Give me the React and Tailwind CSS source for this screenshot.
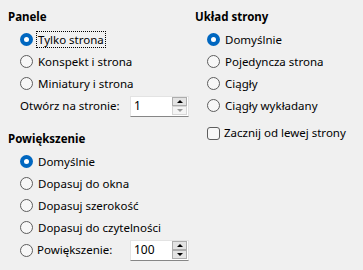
import React from "react";

function Radio({ checked }) {
  return checked ? (
    <span className="w-[13px] h-[13px] rounded-full bg-[#0067c0] flex items-center justify-center shrink-0">
      <span className="w-[5px] h-[5px] rounded-full bg-white" />
    </span>
  ) : (
    <span className="w-[13px] h-[13px] rounded-full border border-[#5d5d5d] bg-[#f7f7f7] shrink-0" />
  );
}

function RadioRow({ checked, label, focus }) {
  return (
    <div className="h-[22px] flex items-center pl-[12px]">
      <Radio checked={checked} />
      <span
        className={
          "ml-[3px] px-[1px] leading-[15px] " +
          (focus ? "border border-dotted border-black" : "border border-transparent")
        }
      >
        {label}
      </span>
    </div>
  );
}

function Spin({ value, downDisabled }) {
  return (
    <div className="w-[59px] h-[21px] bg-white border border-[#e3e3e3] border-b-[#868686] flex items-center relative">
      <span className="pl-[3px] flex-1 text-[12px]">{value}</span>
      <div className="flex flex-col mr-[1px] gap-0">
        <div className="w-[15px] h-[9px] bg-[#e3e3e3] border border-[#adadad] flex items-center justify-center">
          <span className="w-0 h-0 border-l-[3px] border-r-[3px] border-b-[3px] border-l-transparent border-r-transparent border-b-black" />
        </div>
        <div
          className={
            "w-[15px] h-[9px] border flex items-center justify-center " +
            (downDisabled ? "bg-[#f4f4f4] border-[#d6d6d6]" : "bg-[#e3e3e3] border-[#adadad]")
          }
        >
          <span
            className={
              "w-0 h-0 border-l-[3px] border-r-[3px] border-t-[3px] border-l-transparent border-r-transparent " +
              (downDisabled ? "border-t-[#9a9a9a]" : "border-t-black")
            }
          />
        </div>
      </div>
    </div>
  );
}

export default function App() {
  return (
    <div
      className="w-[363px] h-[270px] bg-[#f0f0f0] text-black text-[11.5px] flex"
      style={{ fontFamily: '"Segoe UI", "Noto Sans", sans-serif' }}
    >
      <div className="w-[195px] pl-[8px] pt-[9px]">
        <div className="h-[16px] leading-[16px] font-bold">Panele</div>
        <div className="mt-[3px]">
          <RadioRow checked label="Tylko strona" focus />
          <RadioRow label="Konspekt i strona" />
          <RadioRow label="Miniatury i strona" />
        </div>
        <div className="h-[24px] flex items-center pl-[12px]">
          <span className="w-[110px]">Otwórz na stronie:</span>
          <Spin value="1" downDisabled />
        </div>
        <div className="h-[16px] leading-[16px] font-bold mt-[13px]">Powiększenie</div>
        <div className="mt-[3px]">
          <RadioRow checked label="Domyślnie" />
          <RadioRow label="Dopasuj do okna" />
          <RadioRow label="Dopasuj szerokość" />
          <RadioRow label="Dopasuj do czytelności" />
          <div className="h-[24px] flex items-center pl-[12px]">
            <Radio />
            <span className="ml-[4px] w-[93px]">Powiększenie:</span>
            <Spin value="100" />
          </div>
        </div>
      </div>
      <div className="flex-1 pt-[9px]">
        <div className="h-[16px] leading-[16px] font-bold">Układ strony</div>
        <div className="mt-[3px]">
          <RadioRow checked label="Domyślnie" />
          <RadioRow label="Pojedyncza strona" />
          <RadioRow label="Ciągły" />
          <RadioRow label="Ciągły wykładany" />
        </div>
        <div className="h-[22px] flex items-center pl-[12px] mt-[6px]">
          <span className="w-[13px] h-[13px] rounded-[3px] border border-[#5d5d5d] bg-[#f7f7f7] shrink-0" />
          <span className="ml-[4px]">Zacznij od lewej strony</span>
        </div>
      </div>
    </div>
  );
}
